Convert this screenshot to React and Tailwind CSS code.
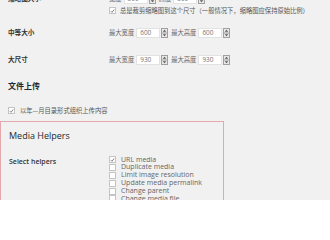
const cjk = '"Noto Sans CJK SC", "Open Sans", sans-serif';
const latin = '"Open Sans", "Noto Sans", sans-serif';

const Spinner = () => (
  <svg width="7" height="10" viewBox="0 0 7 10" className="ml-[1px] shrink-0">
    <rect x="0.5" y="0.5" width="6" height="9" fill="#e8e8e8" stroke="#a0a0a0" />
    <line x1="0.5" y1="5" x2="6.5" y2="5" stroke="#a0a0a0" />
    <path d="M3.5 1.8 L5.2 3.8 L1.8 3.8 Z" fill="#555" />
    <path d="M3.5 8.2 L5.2 6.2 L1.8 6.2 Z" fill="#555" />
  </svg>
);

const NumField = ({ label, value }) => (
  <div className="flex items-center mr-[3px]">
    <span className="text-[6.3px] text-[#666] mr-[2px]">{label}</span>
    <div className="w-[24px] h-[10px] bg-white border border-[#e2e2e2] flex items-center px-[3px] text-[6.5px] text-[#777]" style={{ fontFamily: latin }}>
      {value}
    </div>
    <Spinner />
  </div>
);

const Check = ({ checked }) => (
  <span className="w-[7px] h-[7px] bg-white border border-[#c4c4c4] flex items-center justify-center shrink-0">
    {checked && (
      <svg width="6" height="6" viewBox="0 0 6 6">
        <path d="M1 3.2 L2.4 4.6 L5 1.2" fill="none" stroke="#555" strokeWidth="0.9" />
      </svg>
    )}
  </span>
);

export default function App() {
  const helpers = [
    ['URL media', true],
    ['Duplicate media', false],
    ['Limit image resolution', false],
    ['Update media permalink', false],
    ['Change parent', false],
    ['Change media file', false],
  ];

  return (
    <div className="w-[330px] h-[200px] overflow-hidden bg-[#f1f1f1] text-[#444]" style={{ fontFamily: cjk }}>
      <div className="-mt-[7px]">
        {/* 缩略图大小 */}
        <div className="flex pl-[8px]">
          <div className="w-[101px] text-[6.6px] font-bold text-[#333] leading-[11px]">缩略图大小</div>
          <div>
            <div className="flex items-center h-[11px]">
              <NumField label="宽度" value="300" />
              <NumField label="高度" value="300" />
            </div>
            <div className="flex items-center gap-[4px] mt-[2px] h-[9px]">
              <Check checked />
              <span className="text-[6.3px] text-[#555] whitespace-nowrap">总是裁剪缩略图到这个尺寸（一般情况下，缩略图应保持原始比例）</span>
            </div>
          </div>
        </div>

        {/* 中等大小 */}
        <div className="flex items-center pl-[8px] mt-[13px] h-[10px]">
          <div className="w-[101px] text-[6.6px] font-bold text-[#333]">中等大小</div>
          <NumField label="最大宽度" value="600" />
          <NumField label="最大高度" value="600" />
        </div>

        {/* 大尺寸 */}
        <div className="flex items-center pl-[8px] mt-[17px] h-[10px]">
          <div className="w-[101px] text-[6.6px] font-bold text-[#333]">大尺寸</div>
          <NumField label="最大宽度" value="930" />
          <NumField label="最大高度" value="930" />
        </div>
      </div>

      <div className="pl-[8px] mt-[15px] h-[12px] flex items-center text-[8px] font-bold text-[#23282d]">文件上传</div>

      <div className="pl-[8px] mt-[14px] h-[9px] flex items-center gap-[5px]">
        <Check checked />
        <span className="text-[6.3px] text-[#555]">以年—月目录形式组织上传内容</span>
      </div>

      <div className="mt-[6px] w-[224px] h-[100px] border border-[#e4a9ac] pt-[8px] pl-[8px]" style={{ fontFamily: latin }}>
        <div className="text-[9px] text-[#23282d] leading-[12px]">Media Helpers</div>
        <div className="flex mt-[14px]">
          <div className="w-[100px] text-[7px] font-semibold text-[#333] leading-[8px] pt-[2px]">Select helpers</div>
          <div className="flex flex-col">
            {helpers.map(([name, on]) => (
              <div key={name} className="flex items-center gap-[5px] h-[7.8px]">
                <Check checked={on} />
                <span className="text-[7px] text-[#666] whitespace-nowrap">{name}</span>
              </div>
            ))}
          </div>
        </div>
      </div>
    </div>
  );
}
